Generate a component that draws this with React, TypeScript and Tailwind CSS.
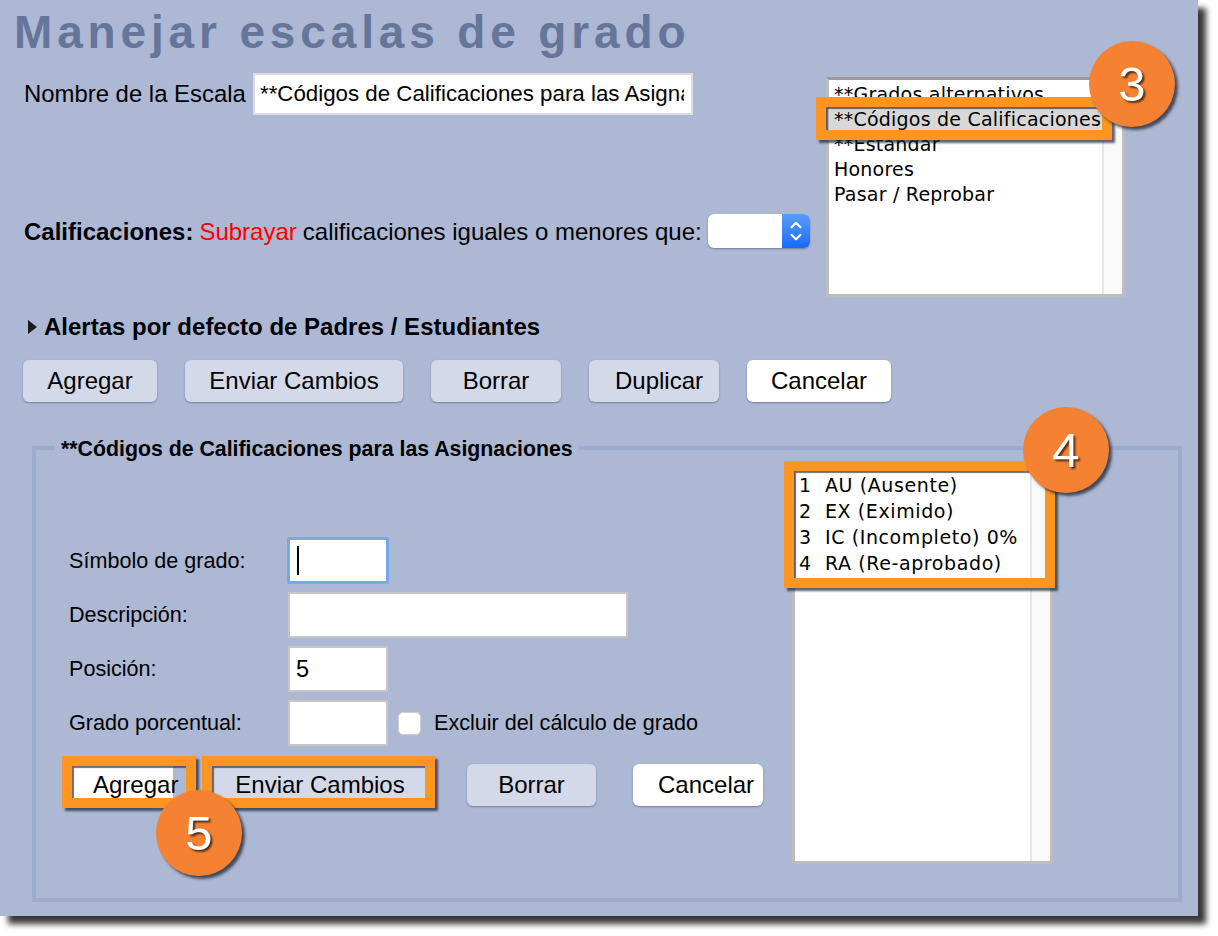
import { ChevronDown, ChevronUp } from 'lucide-react';

const sans = "font-['Liberation_Sans',Arial,sans-serif]";
const listFont = "font-['DejaVu_Sans',sans-serif]";

const topButtons = [
  { label: 'Agregar', className: 'w-[134px] bg-[#d3d9e9]' },
  { label: 'Enviar Cambios', className: 'w-[218px] bg-[#d3d9e9]' },
  { label: 'Borrar', className: 'w-[130px] bg-[#d3d9e9]' },
  { label: 'Duplicar', className: 'w-[130px] bg-[#d3d9e9] pl-[10px]' },
  { label: 'Cancelar', className: 'w-[144px] bg-white' },
];

const scales = ['**Grados alternativos', '**Códigos de Calificaciones', '**Estándar', 'Honores', 'Pasar / Reprobar'];
const codes = ['1  AU (Ausente)', '2  EX (Eximido)', '3  IC (Incompleto) 0%', '4  RA (Re-aprobado)'];

const PageButton = ({ label, className }: { label: string; className: string }) => (
  <button className={`h-[42px] rounded-[6px] text-[24px] leading-none text-black shadow-[0_1px_2px_rgba(70,80,110,0.55)] ${className}`}>
    {label}
  </button>
);

const Highlight = ({ className }: { className: string }) => (
  <div className={`absolute border-[10px] border-[#fc9522] shadow-[3px_3px_2px_rgba(30,35,50,0.7),inset_2px_2px_1px_rgba(60,60,60,0.75)] ${className}`} />
);

const Badge = ({ n, className }: { n: number; className: string }) => (
  <div
    className={`absolute flex h-[86px] w-[86px] items-center justify-center rounded-full bg-[#f58233] text-[49px] leading-none text-white shadow-[3px_3px_3px_rgba(30,35,50,0.75)] [text-shadow:2px_2px_2px_rgba(0,0,0,0.65)] ${className}`}
  >
    {n}
  </div>
);

const TextBox = ({ value = '', className }: { value?: string; className: string }) => (
  <input
    readOnly
    value={value}
    className={`h-[46px] border-2 border-[#c6c6c6] bg-white px-[6px] text-[23.5px] text-black outline-none ${className}`}
  />
);

export default function App() {
  return (
    <div className={`relative h-[936px] w-[1218px] overflow-hidden bg-white ${sans}`}>
      <div className="h-[916px] w-[1198px] bg-[#adb8d4] shadow-[8px_8px_6px_rgba(0,0,0,0.78)]">
        <h1 className="ml-[14px] h-[64px] text-[46px] leading-[64px] font-bold tracking-[4.85px] whitespace-nowrap text-[#66759a]">
          Manejar escalas de grado
        </h1>

        {/* top: name + underline select on the left, scale list on the right */}
        <div className="flex h-[233px] pl-[24px]">
          <div className="w-[802px]">
            <div className="mt-[9px] flex items-center">
              <label className="w-[229px] text-[23.9px] whitespace-nowrap text-black">Nombre de la Escala</label>
              <input
                readOnly
                value="**Códigos de Calificaciones para las Asignaciones"
                className="h-[42px] w-[440px] border-2 border-[#dcdcdc] bg-white pr-[7px] pl-[5px] text-[22.3px] text-black outline-none"
              />
            </div>
            <div className="mt-[99px] flex h-[34px] items-center pt-[2px] text-[24px] whitespace-nowrap text-black">
              <b>Calificaciones:</b>
              <span className="ml-[6px] text-[#ff0000]">Subrayar</span>
              <span className="ml-[6px]">calificaciones iguales o menores que:</span>
              <div className="-mt-[2px] ml-[6px] flex h-[34px] w-[102px] self-start overflow-hidden rounded-[6px] bg-white shadow-[0_1px_2px_rgba(70,80,110,0.6)]">
                <div className="flex-1" />
                <div className="flex w-[28px] flex-col items-center justify-center bg-gradient-to-b from-[#5b9dfb] to-[#1469fb] text-white">
                  <ChevronUp size={18} strokeWidth={2.8} className="-mb-[3px]" />
                  <ChevronDown size={18} strokeWidth={2.8} className="-mt-[3px]" />
                </div>
              </div>
            </div>
          </div>

          <div className={`mt-[13px] flex h-[220px] w-[299px] border-[3px] border-[#bdbdbd] border-t-[#9c9c9c] bg-white ${listFont}`}>
            <div className="flex-1 overflow-hidden pt-[2px] text-[19px] leading-[25px] tracking-[0.22px] text-black">
              {scales.map((s, i) => (
                <div key={s} className={`pl-[5px] whitespace-nowrap ${i === 1 ? 'bg-[#d8d8d8]' : ''}`}>
                  {s}
                </div>
              ))}
            </div>
            <div className="w-[20px] border-l-2 border-[#e6e6e6] bg-[#f9f9f9]" />
          </div>
        </div>

        <div className="mt-[15px] flex h-[30px] items-center pl-[28px]">
          <svg width="9" height="14" viewBox="0 0 9 14" className="mr-[7px]">
            <polygon points="0,0 9,7 0,14" fill="#1c1c1c" />
          </svg>
          <span className="text-[24px] font-bold whitespace-nowrap text-black">Alertas por defecto de Padres / Estudiantes</span>
        </div>

        <div className="mt-[18px] flex gap-[28px] pl-[23px]">
          {topButtons.map((b) => (
            <PageButton key={b.label} label={b.label} className={b.className} />
          ))}
        </div>

        <fieldset className="mt-[32px] ml-[32px] h-[468px] w-[1150px] border-4 border-[#9dabcf]">
          <legend className="ml-[19px] h-[28px] px-[6px] text-[21.3px] leading-[30px] font-bold whitespace-nowrap text-black">
            **Códigos de Calificaciones para las Asignaciones
          </legend>
          <div className="flex">
            <div className="w-[756px] pl-[33px]">
              <div className="mt-[75px] grid grid-cols-[219px_1fr] gap-y-[8px] text-[21.6px] text-black">
                <label className="flex h-[46px] items-center pt-[2px]">Símbolo de grado:</label>
                <div className="-ml-[1px] flex h-[47px] w-[102px] items-center rounded-[2px] border-[3px] border-[#76a9e8] bg-white pl-[7px]">
                  <div className="h-[29px] w-[2px] bg-black" />
                </div>

                <label className="flex h-[46px] items-center">Descripción:</label>
                <TextBox className="w-[340px]" />

                <label className="flex h-[46px] items-center">Posición:</label>
                <TextBox value="5" className="w-[100px]" />

                <label className="flex h-[46px] items-center">Grado porcentual:</label>
                <div className="flex h-[46px] items-center">
                  <TextBox className="w-[100px]" />
                  <div className="ml-[10px] h-[23px] w-[23px] rounded-[5px] border border-[#cfcfcf] bg-white" />
                  <span className="ml-[13px] whitespace-nowrap">Excluir del cálculo de grado</span>
                </div>
              </div>

              <div className="mt-[18px] flex">
                <button className="h-[42px] w-[104px] bg-white pl-[24px] text-left text-[24px] leading-none text-black">
                  <span className="whitespace-nowrap">Agregar</span>
                </button>
                <PageButton label="Enviar Cambios" className="ml-[38px] w-[218px] bg-[#d3d9e9]" />
                <PageButton label="Borrar" className="ml-[38px] w-[129px] bg-[#d3d9e9]" />
                <PageButton label="Cancelar" className="ml-[37px] w-[130px] bg-white pl-[25px] text-left" />
              </div>
            </div>

            <div className={`mt-[6px] flex h-[396px] w-[261px] border-[3px] border-[#bdbdbd] bg-white ${listFont}`}>
              <div className="flex-1 overflow-hidden pt-[1px] pl-[4px] text-[19px] leading-[26px] tracking-[0.6px] text-black">
                {codes.map((c) => (
                  <div key={c} className="whitespace-pre">
                    {c}
                  </div>
                ))}
              </div>
              <div className="w-[20px] border-l-2 border-[#e6e6e6] bg-[#f9f9f9]" />
            </div>
          </div>
        </fieldset>
      </div>

      {/* annotations on top of the screenshot */}
      <Highlight className="top-[97px] left-[816px] h-[43px] w-[296px]" />
      <Highlight className="top-[461px] left-[784px] h-[127px] w-[271px]" />
      <Highlight className="top-[756px] left-[62px] h-[52px] w-[134px]" />
      <Highlight className="top-[756px] left-[202px] h-[52px] w-[233px]" />
      <Badge n={3} className="top-[41px] left-[1089px]" />
      <Badge n={4} className="top-[407px] left-[1023px]" />
      <Badge n={5} className="top-[790px] left-[156px]" />
    </div>
  );
}
